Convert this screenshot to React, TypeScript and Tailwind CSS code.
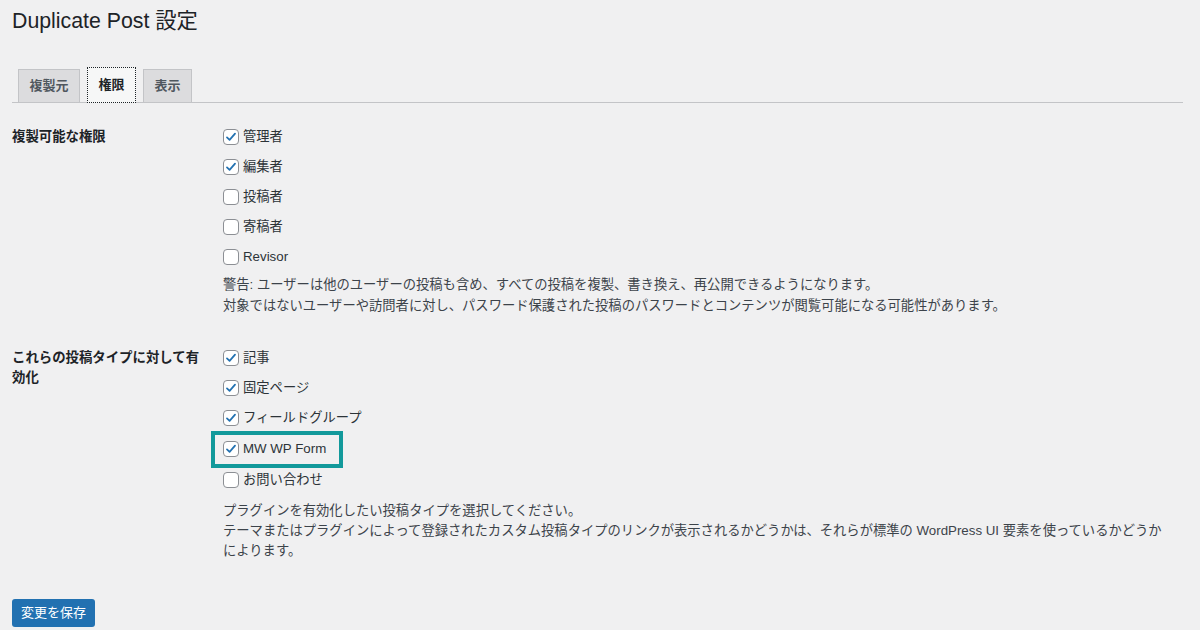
const font = "font-['Liberation_Sans','Noto_Sans_CJK_JP',sans-serif]";

function Check({ checked }: { checked?: boolean }) {
    return (
        <span className="flex h-4 w-4 shrink-0 items-center justify-center rounded-[4px] border border-[#8c8f94] bg-white">
            {checked && (
                <svg viewBox="0 0 16 16" className="h-[14px] w-[14px]">
                    <path
                        d="M3.4 8.4 L6.4 11.3 L12.6 4.2"
                        fill="none"
                        stroke="#2271b1"
                        strokeWidth="2"
                        strokeLinecap="round"
                        strokeLinejoin="round"
                    />
                </svg>
            )}
        </span>
    );
}

function Option({ label, checked }: { label: string; checked?: boolean }) {
    return (
        <div className="flex h-[30px] items-center gap-[4px] text-[13.3px] text-[#2c3338]">
            <Check checked={checked} />
            <span>{label}</span>
        </div>
    );
}

const roles = [
    { label: "管理者", checked: true },
    { label: "編集者", checked: true },
    { label: "投稿者" },
    { label: "寄稿者" },
    { label: "Revisor" },
];

export default function App() {
    return (
        <div className={`${font} min-h-[630px] w-[1200px] bg-[#f0f0f1] pl-3 text-[#1d2327]`}>
            <h1 className="pt-[7px] text-[21.3px] leading-[29px] font-normal">
                Duplicate Post 設定
            </h1>

            {/* tabs */}
            <div className="mt-[31px] mr-[17px] flex items-end gap-[7px] border-b border-[#c3c4c7] pl-[6px]">
                <div className="-mb-px flex h-[34px] w-[62px] items-center justify-center border border-[#c3c4c7] bg-[#dcdcde] text-[13px] font-bold text-[#50575e]">
                    複製元
                </div>
                <div className="-mb-px flex h-[36px] w-[49px] items-center justify-center border border-dotted border-[#1d2327] bg-[#f6f7f7] text-[13px] font-bold text-[#1d2327]">
                    権限
                </div>
                <div className="-mb-px flex h-[34px] w-[49px] items-center justify-center border border-[#c3c4c7] bg-[#dcdcde] text-[13px] font-bold text-[#50575e]">
                    表示
                </div>
            </div>

            {/* section 1 */}
            <div className="mt-[19px] flex">
                <div className="w-[211px] shrink-0 pt-[5px] text-[13.4px] leading-[20px] font-bold text-[#1d2327]">
                    <div className="w-[196px]">複製可能な権限</div>
                </div>
                <div>
                    {roles.map((r) => (
                        <Option key={r.label} label={r.label} checked={r.checked} />
                    ))}
                    <p className="mt-[2px] text-[13.3px] leading-[21px] whitespace-nowrap text-[#3c434a]">
                        警告: ユーザーは他のユーザーの投稿も含め、すべての投稿を複製、書き換え、再公開できるようになります。
                        <br />
                        対象ではないユーザーや訪問者に対し、パスワード保護された投稿のパスワードとコンテンツが閲覧可能になる可能性があります。
                    </p>
                </div>
            </div>

            {/* section 2 */}
            <div className="mt-[27px] flex">
                <div className="w-[211px] shrink-0 pt-[5px] text-[13.4px] leading-[20px] font-bold text-[#1d2327]">
                    <div className="w-[196px]">これらの投稿タイプに対して有効化</div>
                </div>
                <div>
                    <Option label="記事" checked />
                    <Option label="固定ページ" checked />
                    <div className="pb-px">
                        <Option label="フィールドグループ" checked />
                    </div>
                    <div className="relative">
                        <Option label="MW WP Form" checked />
                        <div className="absolute -top-[3px] -left-[12px] h-[37px] w-[132px] border-[4px] border-[#12999b]" />
                    </div>
                    <div className="pt-px">
                        <Option label="お問い合わせ" />
                    </div>
                    <p className="mt-[6px] text-[13.3px] leading-[20px] whitespace-nowrap text-[#3c434a]">
                        プラグインを有効化したい投稿タイプを選択してください。
                        <br />
                        テーマまたはプラグインによって登録されたカスタム投稿タイプのリンクが表示されるかどうかは、それらが標準の WordPress UI 要素を使っているかどうか
                        <br />
                        によります。
                    </p>
                </div>
            </div>

            <button className="mt-[38px] h-[28px] w-[83px] rounded-[3px] bg-[#2271b1] text-[13px] text-white">
                変更を保存
            </button>
        </div>
    );
}
